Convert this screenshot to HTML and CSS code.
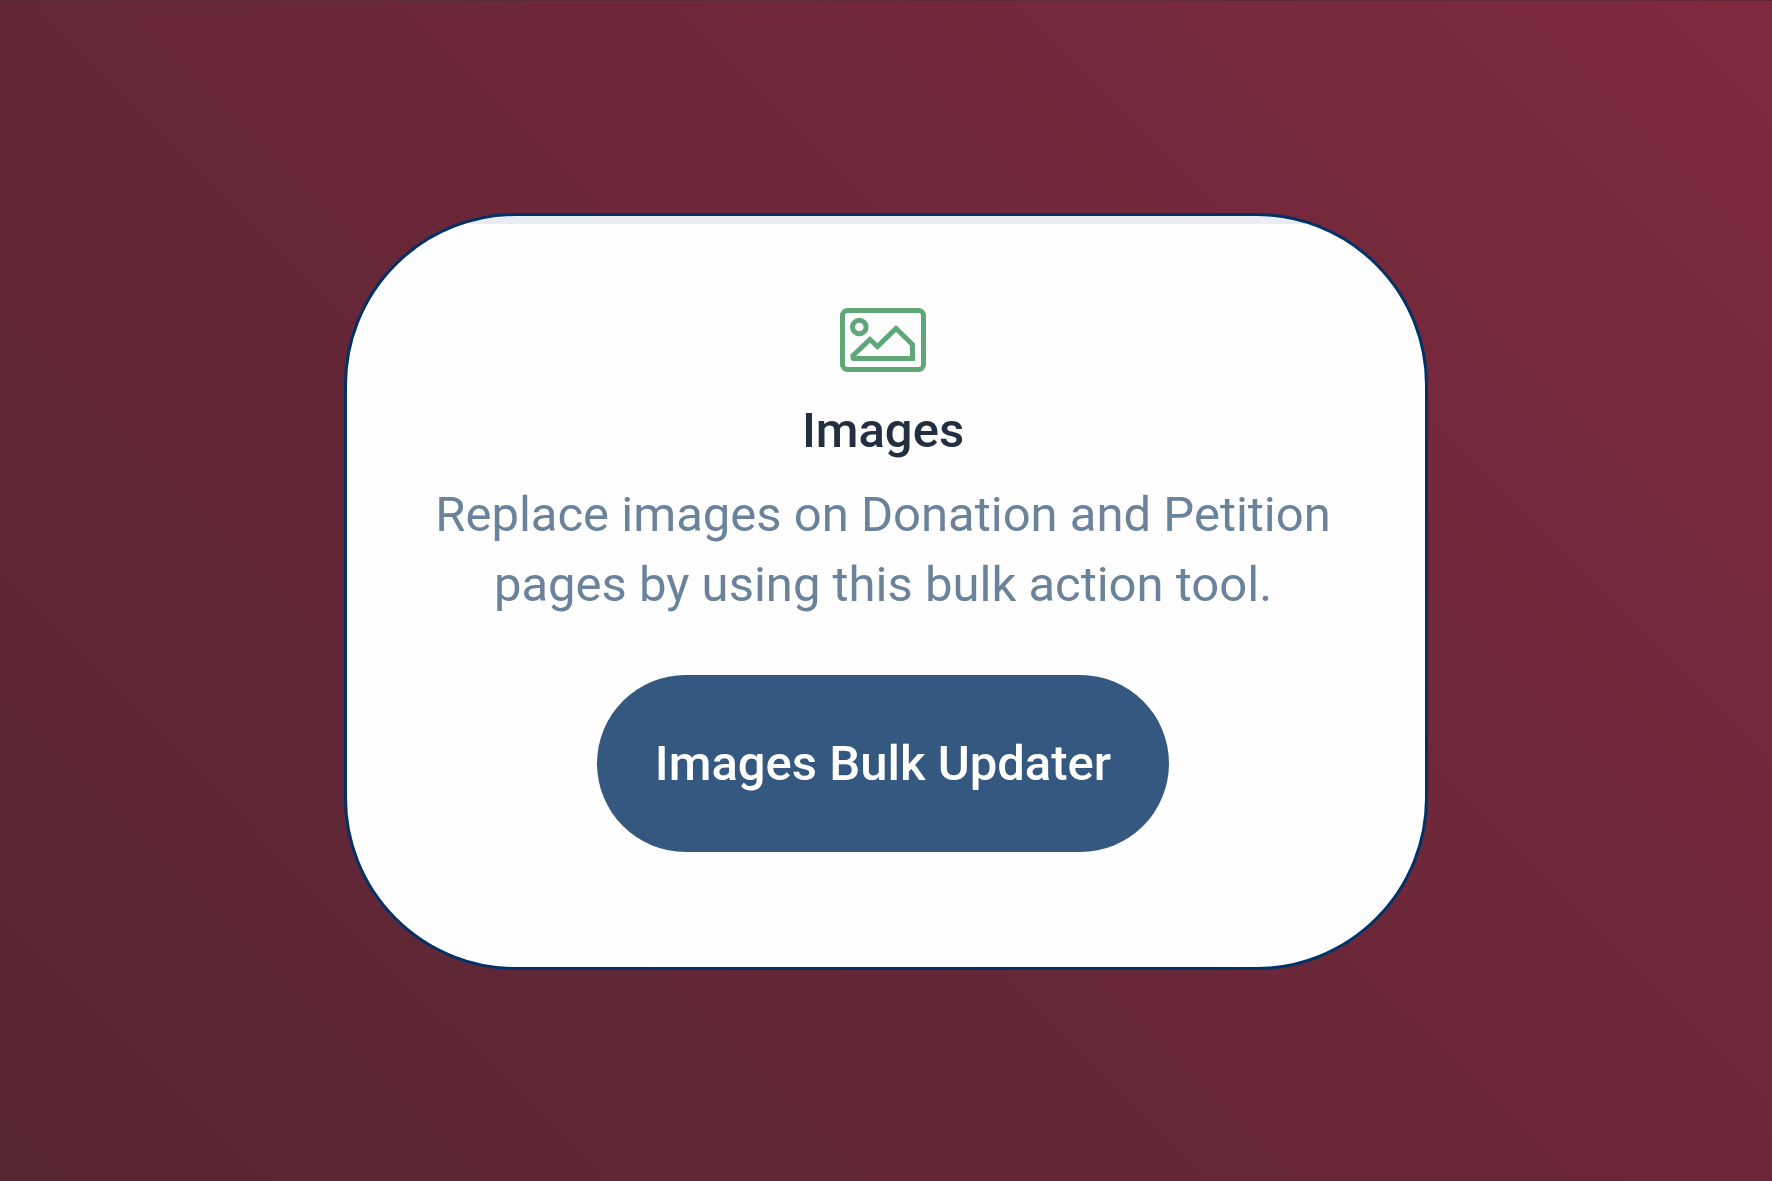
FILE: index.html
```html
<!DOCTYPE html>
<html lang="en">
  <head>
    <meta charset="UTF-8">
    <meta name="viewport" content="width=device-width, initial-scale=1.0">
    <title>Images Bulk Updater</title>
    <link rel="stylesheet" href="styles.css">
  </head>
  <body>
    <main class="card">
      <svg class="card-icon" viewBox="0 0 86 64" fill="none" stroke="currentColor" stroke-width="5" stroke-linejoin="round" aria-hidden="true">
        <rect x="2.5" y="2.5" width="81" height="59" rx="5"/>
        <circle cx="19.3" cy="19" r="6.8"/>
        <path stroke-linejoin="miter" d="M30 31.5 37.5 38.5 56 20.5 72.5 36.5V50.5H14Q13 50.5 13 49.5V47.5Z"/>
      </svg>
      <h2 class="card-title">Images</h2>
      <p class="card-text">Replace images on Donation and Petition pages by using this bulk action tool.</p>
      <button class="card-button" type="button">Images Bulk Updater</button>
    </main>
  </body>
</html>
```

FILE: styles.css
```css
* {
  box-sizing: border-box;
}

body {
  display: flex;
  align-items: center;
  justify-content: center;
  min-height: 100vh;
  margin: 0;
  border-top: 1px solid #5c2a38;
  background: linear-gradient(225deg, #802a3e, #652737 60%, #592633) fixed;
  font-family: Roboto, "Liberation Sans", sans-serif;
  font-size: 49px;
  line-height: 70px;
}

.card {
  display: flex;
  flex-direction: column;
  align-items: center;
  width: 90%;
  max-width: 1084px;
  padding: 92px 86px 115px 80px;
  border: 3px solid #003267;
  border-radius: 172px;
  background: linear-gradient(#e9edf3, #e9edf3) top / 100% 8px no-repeat #fefefe;
  text-align: center;
}

.card-icon {
  width: 86px;
  height: 64px;
  color: #5fa777;
}

.card-title {
  margin: 24px 0 14px;
  color: #212f40;
  font-size: 49px;
  font-weight: 500;
}

.card-text {
  margin: 0 0 55px;
  color: #6b829b;
}

.card-button {
  padding: 54px 58px 53px;
  border: none;
  border-radius: 89px;
  background-color: #34587f;
  color: #fff;
  font: inherit;
  font-weight: 500;
  cursor: pointer;
}

.card-button:hover {
  background-color: #2c4c6f;
}
```
